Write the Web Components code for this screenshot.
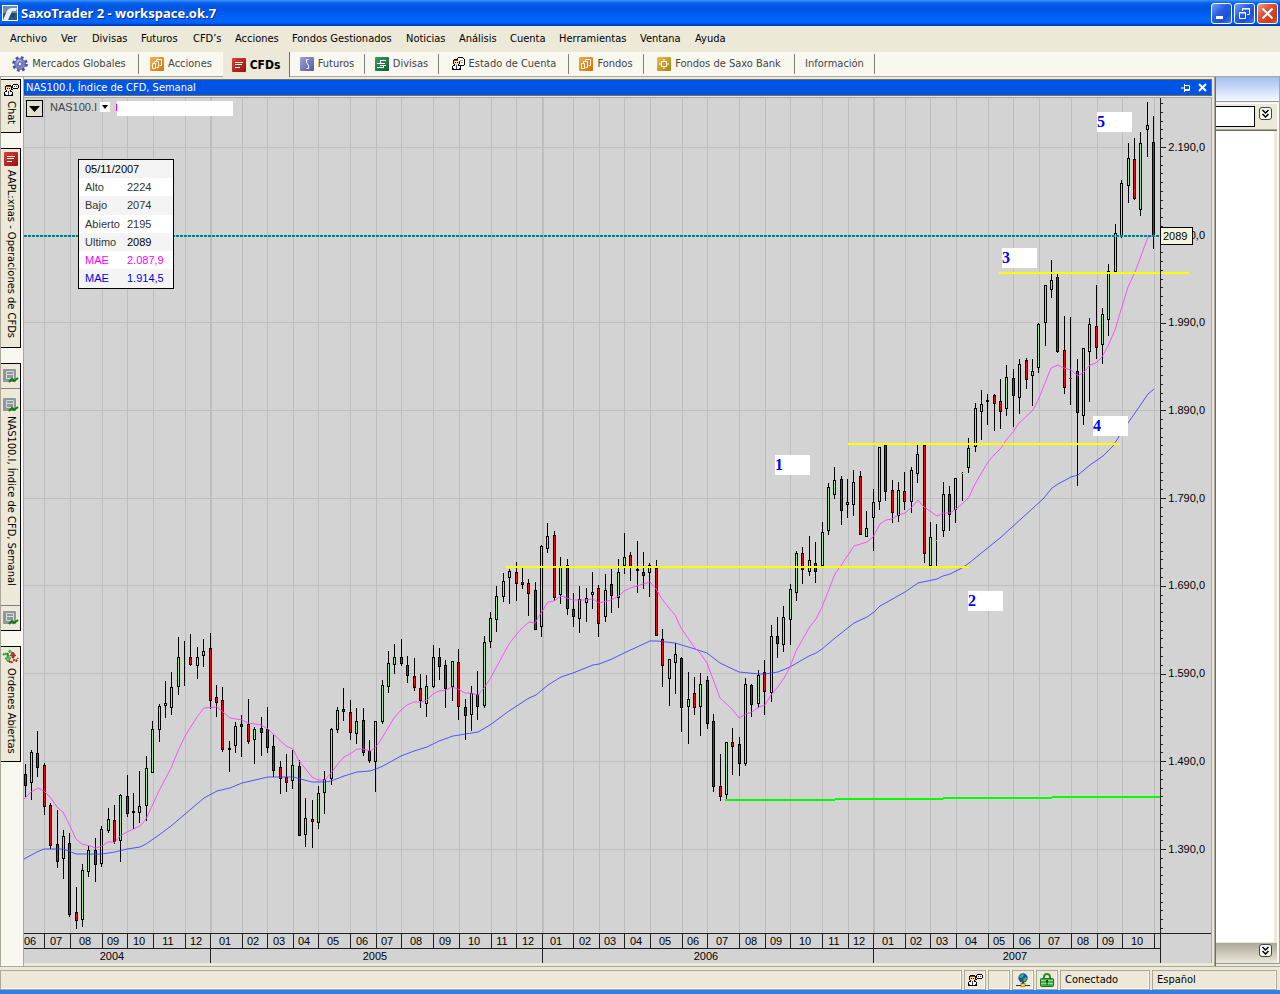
<!DOCTYPE html>
<html lang="es">
<head>
<meta charset="utf-8">
<title>SaxoTrader 2 - workspace.ok.7</title>
<style>
html, body { height: 100%; margin: 0; }
body { background: #ece9d8; font: 11px/14px "DejaVu Sans Condensed", "DejaVu Sans", sans-serif; color: #000; }
</style>
</head>
<body>
<trader-app></trader-app>

<script>
const define = (name, html, setup) => {
  const tpl = document.createElement('template');
  tpl.innerHTML = html;
  customElements.define(name, class extends HTMLElement {
    constructor() {
      super();
      this.attachShadow({ mode: 'open' }).append(tpl.content.cloneNode(true));
    }
    connectedCallback() { if (setup) setup(this, this.shadowRoot); }
  });
};

/* ---------- icons: width, height, artwork ---------- */
const person = `<g shape-rendering="crispEdges">
  <path d="M3 2h5v1H3zM2 3h1v4H2zM8 3h1v4H8zM3 7h1v1H3zM7 7h1v1H7zM2 8h2v1H2zM7 8h2v1H7zM1 9h1v4H1zM9 9h1v4H9zM1 12h9v1H1z" fill="#000"/>
  <path d="M3 3h5v1H3z" fill="#6b4a10"/><path d="M3 4h5v3H3zM4 7h3v1H4z" fill="#ffe08a"/>
  <path d="M4 5h1v1H4zM6 5h1v1H6z" fill="#000"/><path d="M4 8h3v1H4zM2 9h7v3H2z" fill="#fff"/><path d="M5 8h1v4H5zM2 11h1v1H2zM8 11h1v1H8z" fill="#2a3fd0"/></g>`;
const tile = (a, b, mark) => `
  <defs><linearGradient id="g" x1="0" y1="0" x2="1" y2="1"><stop offset="0" stop-color="${a}"/><stop offset="1" stop-color="${b}"/></linearGradient></defs>
  <rect width="14" height="14" rx="1" fill="url(#g)"/>${mark}`;
const copies = `<path d="M6.500 2.500h5v6h-2M6.500 2.500v2M4.500 4.500h4v6h-2M4.500 4.500v2M2.500 6.500h3v5h-3z" fill="none" stroke="#fff"/>`;
const chartMark = `
  <rect width="13" height="13" rx="1" fill="#8f979b"/><path d="M3.500 2.500h7v7h-7zM3.500 5.500h7" fill="none" stroke="#d4d9da"/>
  <path d="M6 13l3-3 2 2 4-3" fill="none" stroke="#0b7d0b" stroke-width="2"/>`;
const ICONS = {
  saxo: [16, 16, `<rect width="16" height="16" fill="#fff"/><rect x="1" y="1" width="14" height="14" fill="#33567c"/><rect x="1" y="1" width="14" height="7" fill="#6d8db0"/><path d="M1 15L5 6c1-2 3-3 5-3h5l-1 3h-4L6 15z" fill="#e8eef5"/><path d="M8 12l2-4h3l-1 4z" fill="#24456a"/>`],
  gear: [16, 16, `<circle cx="8" cy="8" r="6.300" fill="none" stroke="#4a4f9c" stroke-width="3" stroke-dasharray="2.600 2.350"/><circle cx="8" cy="8" r="5.300" fill="#7d84cc" stroke="#5d63b6"/><circle cx="7" cy="6" r="2.500" fill="#a7addf"/><circle cx="8" cy="8" r="2" fill="#f8f7f0" stroke="#4a4f9c"/>`],
  shares: [14, 14, tile('#f3b050', '#d97708', copies)],
  cfd: [14, 14, tile('#e04038', '#8f1210', '<path d="M3 4.500h8M3 6.500h7M3 9.500h5" stroke="#fff"/>')],
  futures: [14, 14, tile('#98a0d4', '#565c9e', '<path d="M8.500 2.500h-2v3l2 3v3h-2" fill="none" stroke="#fff"/>')],
  forex: [14, 14, tile('#3f9a62', '#0c5f33', '<path d="M5 3.500h6M2 6.500h8M5.500 6.500v-3M2 10.500h7M5 8.500h6M8.500 8.500v2" fill="none" stroke="#fff"/>')],
  funds: [14, 14, tile('#f7a94a', '#d86e05', copies)],
  bank: [14, 14, tile('#e6c04c', '#b07c08', '<path d="M4.500 4.500h5v5h-5zM7 2v2M7 10v2M2 7h2M10 7h2" fill="none" stroke="#fff"/>')],
  account: [14, 14, person + '<g shape-rendering="crispEdges"><path d="M7 1h5v1h1v6h-3V7h-1V4H7z" fill="#fff"/><path d="M6 1h1v2H6zM7 0h5v1H7zM12 1h1v1h-1zM13 2h1v6h-1zM9 8h4v1H9z" fill="#000"/><path d="M9 3h3v1H9zM10 5h2v1h-2z" fill="#999"/></g>'],
  chat: [16, 14, person + '<g shape-rendering="crispEdges"><path d="M10 1h5v1h-5zM9 2h1v3H9zM15 2h1v3h-1zM10 5h5v1h-5zM9 6h1v1H9z" fill="#000"/><path d="M10 2h5v3h-5z" fill="#fff"/><path d="M11 3h1v1h-1zM13 3h1v1h-1z" fill="#555"/></g>'],
  chart: [15, 14, chartMark],
  orders: [15, 14, '<path d="M0 5l2-2 2 2 3-4 2 2" fill="none" stroke="#1a9c1a" stroke-width="2" stroke-dasharray="2 1"/><path d="M6 11l2 2 3-3 2 1 2-3" fill="none" stroke="#c81818" stroke-width="2" stroke-dasharray="2 1"/><path d="M4 5h2v3h2l-3 4-3-4h2z" fill="#3fe03f" stroke="#333" stroke-width=".5"/><path d="M9 8V6H7l3-4 3 4h-2v2z" fill="#e82020" stroke="#333" stroke-width=".5"/>'],
  globe: [14, 14, '<circle cx="7" cy="5" r="4.700" fill="#1556b0"/><path d="M3 4l3-3 2 1-2 3zM7 6l3-2 1 2-3 3z" fill="#49b84a"/><path d="M6 9h2v2H6z" fill="#333"/><path d="M0 12h14v1H0z" fill="#333"/><rect x="5" y="10.500" width="4" height="3" fill="#ffd23a" stroke="#7a5a00" stroke-width=".6"/>'],
  lock: [14, 14, '<path d="M4 6V4a3 3 0 0 1 6 0v2" fill="none" stroke="#2d8b33" stroke-width="2"/><rect x=".500" y="5.500" width="13" height="8" rx="1" fill="#43b04a" stroke="#1e6f25"/><path d="M1 7.500h12M1 10.500h12" stroke="#8fdc92"/><path d="M6 7h2v2h-.500v3h-1V9H6z" fill="#0d4513"/>']
};
customElements.define('app-icon', class extends HTMLElement {
  connectedCallback() {
    const [w, h, art] = ICONS[this.getAttribute('name')];
    const root = this.shadowRoot || this.attachShadow({ mode: 'open' });
    root.innerHTML = `<style>:host{display:block;flex:none;width:${w}px;height:${h}px}svg{display:block;overflow:visible}</style>
      <svg width="${w}" height="${h}" viewBox="0 0 ${w} ${h}" aria-hidden="true">${art}</svg>`;
  }
});

/* ---------- title bar ---------- */
define('window-button', `
<style>
  :host { display: block; }
  button { display: grid; place-items: center; width: 21px; height: 21px; padding: 0; border: 1px solid #fff; border-radius: 3px;
    background: linear-gradient(135deg, #7ba0f4 0%, #2a5fe4 40%, #1a50d8 70%, #3d78f0 100%); }
  :host([kind="close"]) button { background: linear-gradient(135deg, #f0a088 0%, #e0583a 35%, #cc3a14 75%, #d95c30 100%); }
  svg { display: none; }
  :host([kind="min"]) .min, :host([kind="restore"]) .restore, :host([kind="close"]) .close { display: block; }
</style>
<button type="button">
  <svg class="min" width="13" height="13"><path d="M1 9h7v3H1z" fill="#fff"/></svg>
  <svg class="restore" width="13" height="13"><path d="M4.500 4V1.500h7v6H9M4 2h8M1.500 5.500h6v6h-6zM1 6h7" fill="none" stroke="#fff"/></svg>
  <svg class="close" width="13" height="13"><path d="M1.500 1.500l10 10M11.500 1.500l-10 10" stroke="#fff" stroke-width="2"/></svg>
</button>`, (el, r) => r.querySelector('button').setAttribute('aria-label', el.getAttribute('label')));

define('title-bar', `
<style>
  :host { display: flex; align-items: center; height: 26px; padding: 0 2px 0 2px; gap: 2px; color: #fff;
    background: linear-gradient(#3d95ff 0, #2a86fb 1px, #0560e8 3px, #0054e3 8px, #005cf0 14px, #0066ff 20px, #0060f8 23px, #0040c8 25px, #0038b8 26px); }
  h1 { flex: 1; margin: 0 0 0 1px; font: bold 13px/18px "Noto Sans", "Open Sans", sans-serif; text-shadow: 1px 1px #0a2a80; }
</style>
<app-icon name="saxo"></app-icon>
<h1>SaxoTrader 2 - workspace.ok.7</h1>
<window-button kind="min" label="Minimizar"></window-button>
<window-button kind="restore" label="Restaurar"></window-button>
<window-button kind="close" label="Cerrar"></window-button>`);

/* ---------- menu ---------- */
define('menu-item', `
<style>
  :host { display: block; flex: none; width: var(--w, auto); }
  button { border: 0; padding: 0; background: none; font: inherit; color: inherit; white-space: nowrap; }
</style>
<button type="button"><slot></slot></button>`, el => el.style.setProperty('--w', el.getAttribute('w') + 'px'));

define('menu-bar', `
<style>
  :host { display: flex; align-items: center; height: 26px; padding-left: 10px; background: #ece9d8; }
</style>
<menu-item w="51">Archivo</menu-item><menu-item w="31">Ver</menu-item><menu-item w="49">Divisas</menu-item>
<menu-item w="52">Futuros</menu-item><menu-item w="42">CFD’s</menu-item><menu-item w="57">Acciones</menu-item>
<menu-item w="114">Fondos Gestionados</menu-item><menu-item w="53">Noticias</menu-item><menu-item w="51">Análisis</menu-item>
<menu-item w="49">Cuenta</menu-item><menu-item w="81">Herramientas</menu-item><menu-item w="55">Ventana</menu-item>
<menu-item w="40">Ayuda</menu-item>`);

/* ---------- workspace tabs ---------- */
define('work-tab', `
<style>
  :host { display: flex; flex: none; width: var(--w); height: 24px; box-sizing: border-box; color: #444; }
  button { flex: 1; display: flex; align-items: center; justify-content: center; gap: 4px; padding: 0; border: 0; border-right: 1px solid #808080;
    margin: 2px 0; background: none; font: inherit; color: inherit; white-space: nowrap; }
  :host([plain]) button { border-right: 0; }
  :host([active]) { height: 25px; background: #ece9d8; color: #000; }
  :host([active]) button { margin: 0; border-right-color: #716f64; font-weight: bold; font-size: 12px; }
</style>
<button type="button" role="tab"><slot name="icon"></slot><span><slot></slot></span></button>`,
  el => el.style.setProperty('--w', el.getAttribute('w') + 'px'));

define('tab-bar', `
<style>
  :host { display: flex; height: 25px; background: linear-gradient(#f8f7f0 24px, #aca899 24px); }
</style>
<work-tab w="139"><app-icon slot="icon" name="gear"></app-icon>Mercados Globales</work-tab>
<work-tab w="84" plain><app-icon slot="icon" name="shares"></app-icon>Acciones</work-tab>
<work-tab w="67" active><app-icon slot="icon" name="cfd"></app-icon>CFDs</work-tab>
<work-tab w="75"><app-icon slot="icon" name="futures"></app-icon>Futuros</work-tab>
<work-tab w="74"><app-icon slot="icon" name="forex"></app-icon>Divisas</work-tab>
<work-tab w="130"><app-icon slot="icon" name="account"></app-icon>Estado de Cuenta</work-tab>
<work-tab w="75"><app-icon slot="icon" name="funds"></app-icon>Fondos</work-tab>
<work-tab w="151"><app-icon slot="icon" name="bank"></app-icon>Fondos de Saxo Bank</work-tab>
<work-tab w="80">Información</work-tab>`);

/* ---------- left dock ---------- */
define('dock-tab', `
<style>
  :host { display: flex; flex-direction: column; align-items: center; box-sizing: border-box; width: 20px; height: var(--h);
    border: solid #000; border-width: 1px 1px 1px 0; background: #ece9d8; }
  button { display: flex; align-items: center; flex: 1; gap: 4px; padding: 3px 0 0; border: 0; background: none; font: inherit; color: inherit;
    writing-mode: vertical-rl; line-height: 14px; white-space: nowrap; }
  .cap { display: none; align-self: stretch; height: 24px; justify-content: center; align-items: center; }
  :host([capped]) .cap { display: flex; }
  :host([capped]) .cap:first-of-type { border-bottom: 1px solid #808080; }
  :host([capped]) .cap:last-of-type { border-top: 1px solid #808080; }
  :host([capped]) button { padding-top: 9px; }
</style>
<div class="cap"><slot name="before"></slot></div>
<button type="button"><slot name="icon"></slot><span><slot></slot></span></button>
<div class="cap"><slot name="after"></slot></div>`,
  el => el.style.setProperty('--h', el.getAttribute('h') + 'px'));

define('side-dock', `
<style>
  :host { display: flex; flex-direction: column; gap: 15px; width: 22px; border-left: 1px solid #aca899; padding-top: 2px; background: #f8f7f0; }
</style>
<dock-tab h="54"><app-icon slot="icon" name="chat"></app-icon>Chat</dock-tab>
<dock-tab h="200"><app-icon slot="icon" name="cfd"></app-icon>AAPL:xnas - Operaciones de CFDs</dock-tab>
<dock-tab h="268" capped><app-icon slot="before" name="chart"></app-icon><app-icon slot="icon" name="chart"></app-icon>NAS100.I, Índice de CFD, Semanal<app-icon slot="after" name="chart"></app-icon></dock-tab>
<dock-tab h="116"><app-icon slot="icon" name="orders"></app-icon>Ordenes Abiertas</dock-tab>`);

/* ---------- chart data, in plot units ---------- */
/* x, high, body top, body bottom, low, kind (g rising, r falling, d flat, w wick only, p and m small marks) */
const CANDLES = `25 764 774 786 797 r;31 750 752 783 800 g;37 731 753 768 777 r;44 763 765 807 815 r;50 803 805 846 849 r;57 810 844 862 868 r;
63 830 836 859 879 g;69 833 843 915 917 r;76 887 912 921 929 r;82 864 870 920 927 g;88 846 850 872 877 g;95 838 850 865 882 r;
101 826 829 864 867 g;108 808 819 831 833 g;114 805 820 842 844 r;120 794 795 841 862 g;127 775 796 814 817 r;133 793 811 813 829 d;
139 771 806 813 823 g;146 756 768 806 821 g;152 721 729 773 773 g;159 704 706 730 742 g;165 681 703 706 718 g;171 672 687 708 715 g;
178 637 657 687 695 g;184 641 657 657 686 w;190 634 657 665 666 r;197 647 657 666 679 g;203 639 651 656 667 g;210 633 648 701 709 r;
216 685 697 703 717 r;222 687 700 750 752 r;229 741 748 750 772 d;235 722 726 746 753 g;241 715 724 727 757 r;248 699 724 742 744 r;
254 727 729 740 764 g;261 717 728 733 756 r;267 707 729 748 753 r;273 735 746 771 777 r;280 761 767 779 794 r;286 754 777 783 792 r;
292 750 765 781 789 g;299 760 766 836 836 r;305 798 818 835 847 g;312 800 819 822 848 r;318 786 793 823 829 g;324 771 779 793 814 g;
331 728 729 779 785 g;337 707 710 730 733 g;343 688 709 712 721 r;350 700 712 733 740 r;356 708 721 734 744 g;363 708 720 753 756 r;
369 740 751 761 763 r;375 721 721 762 792 g;382 680 685 722 724 g;388 651 663 687 693 g;394 644 657 665 674 g;401 639 657 664 666 r;
407 656 665 676 683 r;414 658 676 688 691 r;420 674 688 701 708 r;426 675 686 704 717 g;433 645 657 687 688 g;439 648 657 667 680 r;
445 660 665 689 708 r;452 661 661 687 701 g;458 649 662 707 720 r;465 699 707 716 740 r;471 686 693 715 731 g;477 671 694 707 720 r;
484 636 642 706 708 g;490 612 618 642 648 g;496 586 596 620 632 g;503 573 581 597 602 g;509 569 571 578 604 g;516 562 572 584 601 r;
522 568 582 585 589 r;528 579 583 594 616 r;535 582 590 630 630 r;541 545 546 627 637 g;547 523 536 549 553 g;554 531 535 598 601 r;
560 557 567 595 604 g;567 559 565 609 615 r;573 593 609 617 627 r;579 586 599 619 633 g;586 588 598 603 622 g;592 572 592 595 609 g;
598 585 588 624 637 r;605 574 590 617 622 g;611 569 584 596 613 r;618 559 572 598 608 g;624 533 557 566 574 g;630 552 555 567 581 r;
637 541 569 571 593 d;643 552 572 576 589 r;649 563 565 573 597 g;656 560 568 636 636 r;662 629 639 666 687 r;669 659 659 679 706 g;
675 643 654 663 694 g;681 657 658 708 732 r;688 672 699 707 744 g;694 677 693 708 715 r;700 673 684 707 736 g;707 676 680 724 729 r;
713 714 721 787 792 r;720 754 786 797 801 r;726 742 742 795 799 g;732 728 742 747 775 r;739 737 744 764 776 r;745 678 684 764 766 g;
751 684 685 705 717 r;758 670 675 704 708 g;764 660 672 692 715 r;771 625 636 693 702 g;777 617 636 644 658 r;783 606 617 645 652 g;
790 584 589 620 645 g;796 551 553 593 601 g;802 547 553 570 584 r;809 536 560 572 576 g;815 542 563 572 583 r;822 522 532 566 566 g;
828 483 487 531 535 g;834 467 480 495 499 g;841 476 479 511 525 r;847 479 502 505 518 g;853 470 482 505 516 g;860 471 476 535 535 r;
866 511 528 537 537 g;873 489 502 518 551 g;879 447 447 502 510 g;885 445 445 492 501 r;892 480 490 513 523 r;898 482 490 516 522 g;
904 472 491 502 510 r;911 467 470 502 513 g;917 445 454 474 483 g;924 445 445 554 563 r;930 522 537 566 566 g;936 524 540 541 566 p;
943 482 494 531 537 g;949 486 494 515 531 r;955 478 478 510 523 g;962 472 473 474 501 p;968 438 448 468 473 g;975 403 408 447 452 g;
981 390 404 412 440 g;987 394 400 402 425 d;994 394 395 404 431 r;1000 379 401 412 429 r;1006 365 377 409 416 g;1013 369 378 396 427 r;
1019 359 364 398 414 g;1026 358 360 380 389 r;1032 359 371 376 406 g;1038 323 324 368 373 g;1045 285 285 323 346 g;1051 260 280 290 298 g;
1057 274 277 352 353 r;1064 316 350 388 394 r;1070 317 378 379 405 m;1077 359 371 413 486 r;1083 348 348 416 425 g;1089 318 324 352 402 g;
1096 285 326 348 359 r;1102 308 314 345 364 g;1108 264 271 320 336 g;1115 224 233 272 272 g;1121 180 183 237 238 g;1128 143 158 186 203 g;
1134 138 159 199 200 r;1140 132 143 210 216 g;1147 102 125 130 157 g;1153 116 142 237 249 r`;
const MAE_FAST = `24,799 31,792 38,788 44,791 50,797 57,807 63,812 69,824 76,839 82,844 90,846 96,848 102,846 108,842 115,842 120,836 127,832 140,826 146,819
152,806 159,791 171,768 178,751 185,736 197,717 204,708 217,707 223,712 230,718 242,720 248,723 261,725 268,729 286,746 293,749 299,761
312,777 318,780 325,780 331,773 337,765 344,757 350,754 357,749 363,749 370,751 376,747 382,738 394,718 401,710 407,705 414,702 421,702
427,700 433,694 439,691 446,690 452,687 458,689 465,693 471,693 478,695 484,688 490,679 497,666 509,644 516,635 522,628 529,622 535,623
541,613 548,602 554,601 561,596 573,600 586,600 593,599 599,603 611,600 619,596 624,591 630,588 637,586 643,584 650,582 656,589 662,599
669,608 675,615 681,628 695,648 700,653 707,663 720,698 732,709 739,718 746,714 752,712 759,707 765,705 771,695 777,688 784,678 790,667
796,651 809,628 816,619 822,607 835,574 842,564 854,546 867,542 873,537 880,524 886,520 892,519 898,515 905,513 911,508 918,500 924,507
937,516 943,513 950,513 956,509 962,504 969,497 975,484 988,462 995,454 1001,448 1007,439 1013,432 1019,423 1033,410 1039,398 1051,368
1058,365 1064,368 1071,370 1078,376 1084,372 1090,365 1096,363 1102,357 1108,346 1115,330 1120,313 1128,287 1135,272 1148,237 1154,236`;
const MAE_SLOW = `24,859 37,852 44,849 63,849 69,851 76,854 102,854 115,852 127,849 140,847 146,844 159,835 171,826 204,798 217,791 230,788 242,783 268,777
293,777 312,782 325,782 331,781 344,776 357,772 370,771 376,769 383,766 401,756 414,751 427,747 439,741 453,736 478,732 490,725 509,711
529,698 536,695 548,685 561,677 573,673 593,665 599,664 612,659 624,653 650,641 657,641 675,643 695,649 701,651 707,653 720,663 739,672
759,674 765,674 778,672 790,667 809,656 816,653 822,649 835,638 854,623 867,617 874,612 880,606 905,592 918,583 937,579 943,576 950,574
962,568 969,563 1000,538 1043,499 1052,488 1058,484 1071,477 1078,475 1090,465 1103,456 1113,446 1120,435 1128,423 1135,413 1148,394 1154,389`;
/* month cells: label and left boundary */
const MONTHS = [['06', 18], ['07', 44], ['08', 70], ['09', 102], ['10', 127], ['11', 153], ['12', 185], ['01', 210], ['02', 242], ['03', 267], ['04', 293],
  ['05', 318], ['06', 350], ['07', 376], ['08', 401], ['09', 433], ['10', 459], ['11', 491], ['12', 516], ['01', 542], ['02', 573], ['03', 599], ['04', 624],
  ['05', 650], ['06', 682], ['07', 707], ['08', 739], ['09', 765], ['10', 790], ['11', 822], ['12', 848], ['01', 873], ['02', 905], ['03', 930], ['04', 956],
  ['05', 988], ['06', 1013], ['07', 1039], ['08', 1071], ['09', 1097], ['10', 1122], ['', 1154]];
const YEARS = [['2004', 17, 210], ['2005', 210, 542], ['2006', 542, 873], ['2007', 873, 1160]];
/* the 2.090,0 label is mostly behind the last-price tag; only its end is drawn */
const PRICES = [['2.190,0', 147], ['0,0', 235], ['1.990,0', 322], ['1.890,0', 410], ['1.790,0', 498], ['1.690,0', 585], ['1.590,0', 673], ['1.490,0', 761], ['1.390,0', 849]];

define('price-chart', `
<style>
  :host { display: block; min-width: 0; min-height: 0; background: #d3d3d3; }
  svg { display: block; width: 100%; height: 100%; }
  text { font: 11px "Liberation Sans", Arial, sans-serif; fill: #000; }
  .mid { text-anchor: middle; }
  .end { text-anchor: end; }
  .crisp { shape-rendering: crispEdges; }
</style>
<svg viewBox="24 98 1187 865" preserveAspectRatio="xMinYMin meet" role="img" aria-label="NAS100.I Semanal"></svg>`, (el, r) => {
  const rect = (x, y, w, h, fill) => `<rect x="${x}" y="${y}" width="${w}" height="${h}" fill="${fill}"/>`;
  let s = '<g class="crisp">';
  for (const [, x] of MONTHS) if (x > 24) s += rect(x, 98, x === 542 || x === 873 || x === 210 ? 2 : 1, 835, '#bebebe');
  for (const [, y] of PRICES) s += rect(24, y, 1136, 1, '#bebebe');
  for (const c of CANDLES.split(';')) {
    const [x, hi, t, b, lo, k] = c.trim().split(' ').map((v, i) => i < 5 ? +v : v);
    s += rect(x, hi, 1, Math.max(lo, b) - hi, '#000');
    if (k === 'g' || k === 'r') s += rect(x - 1, t, 3, b - t, '#000') + rect(x, t + 1, 1, b - t - 2, k === 'g' ? '#90ee90' : '#ff0000');
    if (k === 'd') s += rect(x - 1, t, 3, 2, '#000');
    if (k === 'p') s += rect(x - 1, t, 2, 1, '#50d050');
    if (k === 'm') s += rect(x - 1, t, 3, 1, '#f00000');
  }
  s += '</g>';
  s += `<polyline points="${MAE_SLOW}" fill="none" stroke="#3c3cff" stroke-opacity=".85"/>`;
  s += `<polyline points="${MAE_FAST}" fill="none" stroke="#ff3cff" stroke-opacity=".85"/>`;
  s += '<g class="crisp">';
  s += rect(505, 566, 464, 2, '#ffff00') + rect(848, 443, 272, 2, '#ffff00') + rect(999, 272, 190, 2, '#ffff00');
  s += rect(725, 799, 110, 2, '#00ff00') + rect(835, 798, 108, 2, '#00ff00') + rect(943, 797, 109, 2, '#00ff00') + rect(1052, 796, 109, 2, '#00ff00');
  s += '<path d="M24 236H1160" stroke="#008080" stroke-width="2" stroke-dasharray="3 1"/>';
  s += rect(1160, 98, 1, 865, '#202020') + rect(24, 933, 1187, 1, '#202020') + rect(24, 948, 1136, 1, '#202020');
  for (const [, x] of MONTHS) if (x > 24) s += rect(x, 934, 1, 14, '#202020');
  for (const [, x] of YEARS) if (x > 24) s += rect(x, 934, 1, 29, '#202020');
  for (let i = -5; i < 90; i++) {
    const y = Math.round(147 + i * 8.775);
    if (y < 933) s += rect(1161, y, i % 10 ? 2 : 5, 1, '#202020');
  }
  s += '</g>';
  MONTHS.forEach(([t, x], i) => { if (t) s += `<text class="mid" x="${Math.floor((x + MONTHS[i + 1][1]) / 2) - 1}" y="945">${t}</text>`; });
  for (const [t, a, b] of YEARS) s += `<text class="mid" x="${Math.floor((a + b) / 2) - 1}" y="960">${t}</text>`;
  for (const [t, y] of PRICES) s += `<text class="end" x="1205" y="${y + 4}">${t}</text>`;
  s += '<rect x="1160.500" y="227.500" width="32" height="17" fill="#f5f5dc" stroke="#000"/><text x="1163" y="240">2089</text>';
  r.querySelector('svg').innerHTML = s;
});

define('wave-label', `
<style>
  :host { position: absolute; left: var(--x); top: var(--y); width: 35px; height: 20px; background: #fff; color: #00f;
    font: bold 16px/20px "Liberation Serif", "Times New Roman", serif; }
</style><slot></slot>`);

define('value-box', `
<style>
  :host { position: absolute; left: 54px; top: 61px; width: 94px; border: 1px solid #000; background: #fff; font: 11px/18px "Liberation Sans", Arial, sans-serif; color: #333; }
  table { width: 100%; border-collapse: collapse; }
  th, td { padding: 0; font-weight: normal; text-align: left; }
  tr:nth-child(odd) { background: #f4f4f4; }
  tr:nth-child(4n+3) { line-height: 19px; }
  th { width: 42px; padding-left: 6px; }
  .dark { color: #000; }
  .fast { color: #f0f; }
  .slow { color: #0000e6; }
</style>
<table>
  <tr class="dark"><th colspan="2">05/11/2007</th></tr>
  <tr><th>Alto</th><td>2224</td></tr>
  <tr><th>Bajo</th><td>2074</td></tr>
  <tr><th>Abierto</th><td>2195</td></tr>
  <tr><th>Ultimo</th><td class="dark">2089</td></tr>
  <tr class="fast"><th>MAE</th><td>2.087,9</td></tr>
  <tr class="slow"><th>MAE</th><td>1.914,5</td></tr>
</table>`);

define('chart-legend', `
<style>
  :host { position: absolute; left: 2px; top: 2px; display: flex; align-items: flex-start; font: 11px/14px "Liberation Sans", Arial, sans-serif; color: #444; }
  button { display: grid; place-items: center; padding: 0; }
  .menu { width: 17px; height: 17px; border: 1px solid #000; background: #e4e0d0; }
  .pick { width: 10px; height: 10px; margin: 2px 6px 0 3px; border: 0; background: #fff; }
  span { margin-left: 7px; }
  i { width: 1px; height: 7px; margin-top: 4px; background: #f0f; }
  input { box-sizing: border-box; width: 116px; height: 15px; margin-top: 1px; border: 0; padding: 0; background: #fff; font: inherit; }
</style>
<button class="menu" type="button" aria-label="Opciones"><svg width="11" height="6"><path d="M0 0h11L5.500 6z"/></svg></button>
<span>NAS100.I</span>
<button class="pick" type="button" aria-label="Elegir"><svg width="6" height="4"><path d="M0 0h6L3 4z"/></svg></button>
<i></i><input type="text" aria-label="Serie">`);

/* ---------- chart window ---------- */
define('chart-window', `
<style>
  :host { display: flex; flex-direction: column; min-width: 0; padding: 2px 2px 3px 0; border: solid #716f64; border-width: 0 1px 0 0; box-shadow: inset -1px 0 #aca899, inset 1px 0 #aca899; background: #ece9d8; }
  header { display: flex; align-items: center; gap: 8px; height: 15px; margin: 0 1px 1px 1px; padding: 0 4px 0 2px; border: solid #716f64; border-width: 1px 1px 1px 0; background: #0054e3; color: #fff; }
  h2 { flex: 1; margin: 0; font: inherit; }
  header button { display: block; padding: 0; border: 0; background: none; }
  header svg { display: block; }
  .plot { position: relative; flex: 1; display: grid; min-height: 0; margin: 0 1px 0 1px; border-top: 1px solid #aca899; border-right: 1px solid #aca899; }
</style>
<header>
  <h2>NAS100.I, Índice de CFD, Semanal</h2>
  <button type="button" aria-label="Fijar"><svg width="9" height="9"><path d="M0 5h3M3.500 1v8M4 2.500h4.500v5H4M4 6.500h5" stroke="#fff" fill="none"/></svg></button>
  <button type="button" aria-label="Cerrar"><svg width="9" height="9"><path d="M1 1l7 7M8 1L1 8" stroke="#fff" stroke-width="2"/></svg></button>
</header>
<div class="plot">
  <price-chart></price-chart>
  <chart-legend></chart-legend>
  <value-box></value-box>
  <wave-label style="--x:751px;--y:357px">1</wave-label>
  <wave-label style="--x:944px;--y:493px">2</wave-label>
  <wave-label style="--x:978px;--y:150px">3</wave-label>
  <wave-label style="--x:1069px;--y:318px">4</wave-label>
  <wave-label style="--x:1073px;--y:14px">5</wave-label>
</div>`);

/* ---------- right panel ---------- */
define('expand-button', `
<style>
  :host { display: block; flex: none; }
  button { display: grid; place-items: center; width: 13px; height: 13px; padding: 0; border: 1px solid #444; border-radius: 3px; background: #fdfdf8; }
</style>
<button type="button" aria-label="Expandir"><svg width="9" height="9"><path d="M1.500 1l3 3 3-3M1.500 5l3 3 3-3" fill="none" stroke="#000" stroke-width="1.500"/></svg></button>`);

define('side-panel', `
<style>
  :host { display: flex; flex-direction: column; width: 61px; border-right: 1px solid #aca899; padding-right: 2px; margin-bottom: 2px; background: #f8f7f0; border-bottom: 1px solid #8c9aa4; }
  .head { height: 24px; margin-right: -2px; border-bottom: 1px solid #8c9aa4; background: linear-gradient(#a3bff2, #f6f9ff); }
  .bar { display: flex; align-items: flex-start; gap: 4px; height: 23px; margin-top: 2px; padding-top: 2px; padding-right: 5px; border-bottom: 1px solid #aca899; background: #ece9d8; }
  input { flex: 1; min-width: 0; box-sizing: border-box; height: 21px; border: 1px solid #000; border-left: 0; padding: 0; background: #fff; }
  .list { flex: 1; border: solid #716f64; border-width: 1px 0 0; background: #fff; box-shadow: inset -3px 0 #ece9d8; }
  .foot { display: flex; justify-content: flex-end; align-items: flex-start; height: 19px; padding: 1px 5px 0 0; border-top: 1px solid #ece9d8; background: linear-gradient(#aca899, #ece9d8); }
  .bar expand-button { margin-top: 1px; }
</style>
<div class="head"></div>
<div class="bar"><input type="text" aria-label="Buscar"><expand-button></expand-button></div>
<div class="list"></div>
<div class="foot"><expand-button></expand-button></div>`);

/* ---------- status bar ---------- */
define('status-cell', `
<style>
  :host { display: flex; align-items: center; justify-content: center; box-sizing: border-box; height: 20px; width: 22px; border: 1px solid #aca899; box-shadow: inset -1px -1px #f8f7f0; white-space: nowrap; }
  :host([size="fill"]) { flex: 1; }
  :host([size="m"]) { width: 90px; padding-left: 4px; justify-content: flex-start; }
  :host([size="l"]) { width: 125px; padding-left: 4px; justify-content: flex-start; }
</style><slot></slot>`);

define('status-bar', `
<style>
  :host { display: flex; gap: 2px; padding: 3px 3px 0 0; background: #ece9d8; border-top: 1px solid #aca899; border-bottom: 4px solid #2f80e8; }
</style>
<status-cell size="fill"></status-cell>
<status-cell><app-icon name="chat"></app-icon></status-cell>
<status-cell></status-cell>
<status-cell><app-icon name="globe"></app-icon></status-cell>
<status-cell><app-icon name="lock"></app-icon></status-cell>
<status-cell size="m">Conectado</status-cell>
<status-cell size="l">Español</status-cell>`);

/* ---------- application ---------- */
define('trader-app', `
<style>
  :host { display: flex; flex-direction: column; height: 100vh; }
  main { flex: 1; display: flex; min-height: 0; }
  chart-window { flex: 1; }
  side-panel { flex: none; }
</style>
<title-bar></title-bar>
<menu-bar></menu-bar>
<tab-bar></tab-bar>
<main>
  <side-dock></side-dock>
  <chart-window></chart-window>
  <side-panel></side-panel>
</main>
<status-bar></status-bar>`);
</script>
</body>
</html>
